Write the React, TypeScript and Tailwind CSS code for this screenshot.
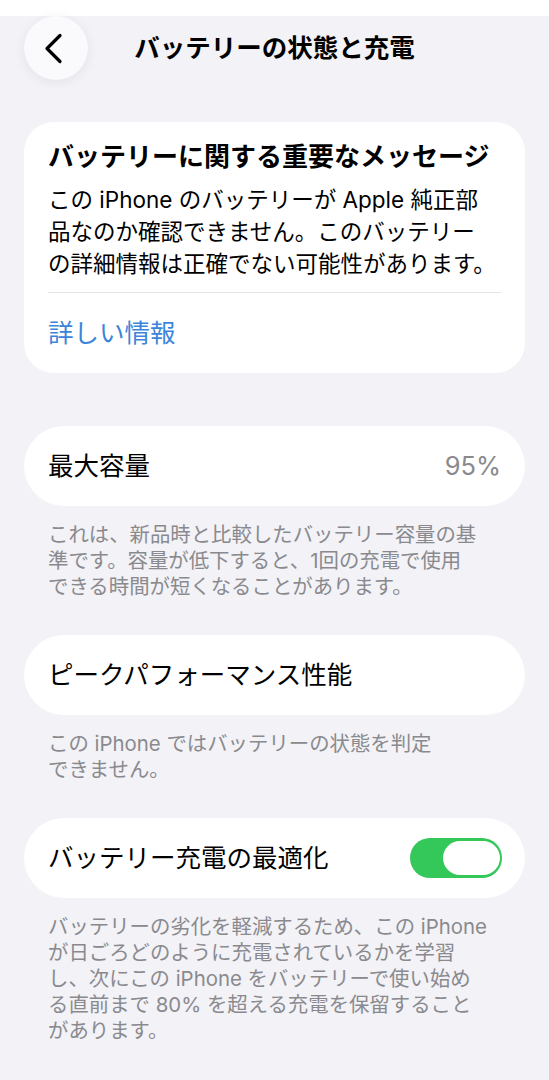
const Footnote = ({ lines }: { lines: string[] }) => (
  <div className="px-12 pt-4 text-[20.4px] leading-[26px] text-[#8a8a8e]">
    {lines.map((l) => (
      <span key={l} className="block whitespace-nowrap">
        {l}
      </span>
    ))}
  </div>
);

const App = () => {
  return (
    <div className="min-h-screen w-full bg-[#f2f2f7] pb-10 font-['Inter','Noto_Sans_CJK_JP',sans-serif] text-black">
      {/* nav bar */}
      <div className="mx-6 mt-4 grid h-16 grid-cols-[64px_1fr_64px] items-center">
        <button
          className="flex h-16 w-16 items-center justify-center rounded-full bg-[#fafafc] pr-[5px] shadow-[0_2px_12px_rgba(0,0,0,0.07)]"
          aria-label="戻る"
        >
          <svg width="19" height="31" viewBox="0 0 19 31" fill="none">
            <path
              d="M16 2.5 L3 15.5 L16 28.5"
              stroke="#000"
              strokeWidth="3.2"
              strokeLinecap="round"
              strokeLinejoin="round"
            />
          </svg>
        </button>
        <h1 className="text-center text-[25.5px] font-semibold leading-[34px]">
          バッテリーの状態と充電
        </h1>
        <div />
      </div>

      {/* important message */}
      <div className="mx-6 mt-[42px] rounded-[30px] bg-white px-6">
        <h2 className="pt-[18px] text-[26px] font-bold leading-[34px]">
          バッテリーに関する重要なメッセージ
        </h2>
        <p className="mt-[10px] text-[22.5px] leading-[32px]">
          <span className="block whitespace-nowrap">この iPhone のバッテリーが Apple 純正部</span>
          <span className="block whitespace-nowrap">品なのか確認できません。このバッテリー</span>
          <span className="block whitespace-nowrap">の詳細情報は正確でない可能性があります。</span>
        </p>
        <div className="mt-3 h-px bg-[#e3e3e8]" />
        <div className="flex h-[80px] items-center text-[25.5px] text-[#3c85d9]">詳しい情報</div>
      </div>

      {/* max capacity */}
      <div className="mx-6 mt-[53px] flex h-[80px] items-center justify-between rounded-full bg-white px-6">
        <span className="text-[25.5px]">最大容量</span>
        <span className="text-[25.5px] text-[#8a8a8e]">95%</span>
      </div>
      <Footnote
        lines={[
          "これは、新品時と比較したバッテリー容量の基",
          "準です。容量が低下すると、1回の充電で使用",
          "できる時間が短くなることがあります。",
        ]}
      />

      {/* peak performance */}
      <div className="mx-6 mt-[35px] flex h-[80px] items-center rounded-full bg-white px-6">
        <span className="text-[25.5px]">ピークパフォーマンス性能</span>
      </div>
      <Footnote lines={["この iPhone ではバッテリーの状態を判定", "できません。"]} />

      {/* optimized charging */}
      <div className="mx-6 mt-[35px] flex h-[80px] items-center justify-between rounded-full bg-white pl-6 pr-[23px]">
        <span className="text-[25.5px]">バッテリー充電の最適化</span>
        <div className="flex h-[40px] w-[92px] items-center justify-end rounded-full bg-[#34c759] px-[2px]">
          <div className="h-[34px] w-[57px] rounded-full bg-white" />
        </div>
      </div>
      <Footnote
        lines={[
          "バッテリーの劣化を軽減するため、この iPhone",
          "が日ごろどのように充電されているかを学習",
          "し、次にこの iPhone をバッテリーで使い始め",
          "る直前まで 80% を超える充電を保留すること",
          "があります。",
        ]}
      />
    </div>
  );
};

export default App;
